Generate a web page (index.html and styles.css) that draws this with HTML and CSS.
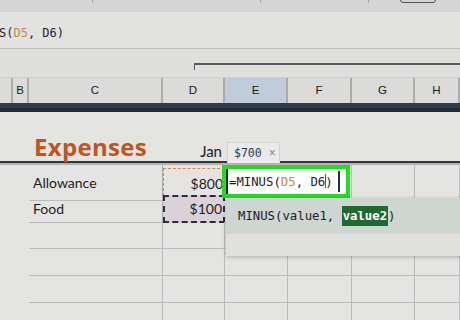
FILE: index.html
```html
<!DOCTYPE html>
<html lang="en">
<head>
    <meta charset="UTF-8">
    <title>Expenses sheet</title>
    <link rel="stylesheet" href="styles.css">
</head>
<body>
    <div class="toolbar">
        <span class="tick" style="margin-left:92px"></span>
        <span class="tick" style="margin-left:167px"></span>
        <span class="tick" style="margin-left:107px"></span>
        <span class="zoom-box"></span>
    </div>
    <div class="formula-bar">
        <span class="fx">S(<span class="ref-a">D5</span>, D6)</span>
    </div>
    <div class="ruler"><div class="bracket"></div></div>
    <div class="col-heads">
        <div class="head"></div>
        <div class="head">B</div>
        <div class="head">C</div>
        <div class="head">D</div>
        <div class="head active">E</div>
        <div class="head">F</div>
        <div class="head">G</div>
        <div class="head">H</div>
    </div>
    <div class="band"></div>

    <div class="sheet">
        <div class="title-row">
            <div></div>
            <div></div>
            <div class="title">Expenses</div>
            <div class="month">Jan</div>
        </div>
        <div class="rows">
            <div class="row first">
                <div class="blank"></div><div class="blank"></div>
                <div class="cell label">Allowance</div>
                <div class="cell num copy-a">$800</div>
                <div class="cell"></div><div class="cell"></div><div class="cell"></div><div class="cell"></div>
            </div>
            <div class="row">
                <div class="blank"></div><div class="blank"></div>
                <div class="cell label">Food</div>
                <div class="cell num copy-b">$100</div>
                <div class="cell"></div><div class="cell"></div><div class="cell"></div><div class="cell"></div>
            </div>
            <div class="row">
                <div class="blank"></div><div class="blank"></div>
                <div class="cell"></div><div class="cell"></div><div class="cell"></div><div class="cell"></div><div class="cell"></div><div class="cell"></div>
            </div>
            <div class="row">
                <div class="blank"></div><div class="blank"></div>
                <div class="cell"></div><div class="cell"></div><div class="cell"></div><div class="cell"></div><div class="cell"></div><div class="cell"></div>
            </div>
            <div class="row">
                <div class="blank"></div><div class="blank"></div>
                <div class="cell"></div><div class="cell"></div><div class="cell"></div><div class="cell"></div><div class="cell"></div><div class="cell"></div>
            </div>
            <div class="row">
                <div class="blank"></div><div class="blank"></div>
                <div class="cell"></div><div class="cell"></div><div class="cell"></div><div class="cell"></div><div class="cell"></div><div class="cell"></div>
            </div>
        </div>

        <!-- value preview -->
        <div class="preview">$700 <span class="x">&times;</span></div>

        <!-- cell being edited -->
        <div class="editor">=MINUS(<span class="ref-a">D5</span>, D6<span class="caret"></span>)</div>

        <!-- function hint -->
        <div class="hint">
            <div class="hint-sig">MINUS(value1, <span class="arg">value2</span>)</div>
            <div class="hint-foot"></div>
        </div>
    </div>
</body>
</html>
```

FILE: styles.css
```css
body {
    margin: 0;
    width: 460px;
    height: 320px;
    overflow: hidden;
    background: #e4e4e2;
    font-family: "Liberation Sans", Arial, sans-serif;
    color: #1c1c1c;
}
.toolbar {
    height: 12px;
    background: #d5d5d8;
    display: flex;
    align-items: flex-start;
}
.tick {
    width: 1px;
    height: 3px;
    background: #a8a8ac;
}
.zoom-box {
    margin-left: 31px;
    margin-top: -3px;
    width: 34px;
    height: 4px;
    border: 1px solid #555;
    border-radius: 3px;
}
.formula-bar {
    height: 36px;
    background: #e2e2e0;
    border-bottom: 1px solid #bcbcbc;
}
.fx {
    display: block;
    padding-top: 14px;
    margin-left: -1px;
    font-family: "DejaVu Sans Mono", monospace;
    font-size: 12px;
    color: #262232;
}
.ref-a { color: #c98a4a; }
.ruler {
    height: 14px;
    padding-top: 14px;
    background: #dfdfdd;
    border-bottom: 1px solid #cfcfcf;
}
.bracket {
    margin-left: 194px;
    height: 5px;
    border-top: 2px solid #5a5a5a;
    border-left: 1px solid #5a5a5a;
}
.col-heads {
    display: grid;
    grid-template-columns: 13px 16px 134px 62px 63px 64px 63px 1fr;
    height: 25px;
    background: #dbdbd9;
}
.head {
    border-right: 2px solid #ababab;
    font-size: 11.5px;
    line-height: 25px;
    text-align: center;
    color: #1a1a1a;
}
.head.active { background: #c2cbd8; }
.band {
    height: 9px;
    background: linear-gradient(#2d3d4d 0 55%, #1f2b37 55%);
}
.sheet {
    position: relative;
    height: 208px;
    overflow: hidden;
}
.title-row {
    display: grid;
    grid-template-columns: 13px 16px 134px 62px 1fr;
    height: 49px;
    border-bottom: 2px solid #363636;
}
.title {
    padding: 20px 0 0 5px;
    font-family: "Open Sans", sans-serif;
    font-weight: 700;
    font-size: 24px;
    letter-spacing: 0.3px;
    line-height: 30px;
    color: #c0551f;
}
.month {
    padding: 29px 3px 0 0;
    text-align: right;
    font-family: "Lato", sans-serif;
    font-size: 15px;
    line-height: 20px;
}
.rows { border-top: 2px solid #b3b3b3; }
.row {
    display: grid;
    grid-template-columns: 13px 16px 134px 62px 63px 64px 63px 1fr;
    height: 27px;
}
.row.first { height: 30px; }
.cell {
    border-right: 1px solid #bcbcbc;
    border-bottom: 1px solid #bcbcbc;
    font-family: "Lato", sans-serif;
    font-size: 14px;
    line-height: 27px;
}
.first .cell { line-height: 35px; }
.label {
    padding-left: 4px;
    border-right-color: #a9a9a9;
}
.num {
    text-align: right;
    padding-right: 1px;
}
.copy-a {
    border-top: 1px dashed #d08a4a;
    border-left: 1px dashed #d08a4a;
    margin-top: 3px;
    line-height: 29px !important;
    background: #e6e4e2;
}
.copy-b {
    border: 2px dashed #35283a;
    background: #d9d3d9;
    line-height: 23px;
}
.preview {
    position: absolute;
    left: 227px;
    top: 30px;
    width: 45px;
    height: 20px;
    padding-left: 6px;
    background: #ebebea;
    border: 1px solid #d4d4d4;
    border-bottom: none;
    font-family: "DejaVu Sans Mono", monospace;
    font-size: 11.5px;
    line-height: 21px;
    color: #2a3a60;
}
.preview .x {
    color: #8a8a8a;
    font-family: "Liberation Sans", sans-serif;
    font-size: 12px;
}
.editor {
    position: absolute;
    left: 222px;
    top: 53px;
    width: 117px;
    height: 25px;
    padding-left: 3px;
    background: #fff;
    border: 4px solid #22dd22;
    box-shadow: inset 2px 0 0 #1d2440;
    font-family: "DejaVu Sans Mono", monospace;
    font-size: 12.3px;
    line-height: 26px;
    color: #1c1c2a;
}
.editor::after {
    content: "";
    position: absolute;
    right: 6px;
    top: 2px;
    width: 2px;
    height: 21px;
    background: #1e2c66;
}
.caret {
    display: inline-block;
    width: 1px;
    height: 14px;
    margin-right: -1px;
    vertical-align: -2px;
    background: #555;
}
.hint {
    position: absolute;
    left: 226px;
    top: 86px;
    width: 240px;
    box-shadow: 0 1px 4px rgba(0,0,0,0.25);
}
.hint-sig {
    height: 36px;
    padding-left: 12px;
    background: #cdd6d0;
    font-family: "DejaVu Sans Mono", monospace;
    font-size: 12.3px;
    line-height: 36px;
    color: #1c1c24;
}
.arg {
    background: #1f6a30;
    color: #fff;
    font-weight: 700;
    padding: 3px 1px;
}
.hint-foot {
    height: 22px;
    background: #e0e0df;
}
```
